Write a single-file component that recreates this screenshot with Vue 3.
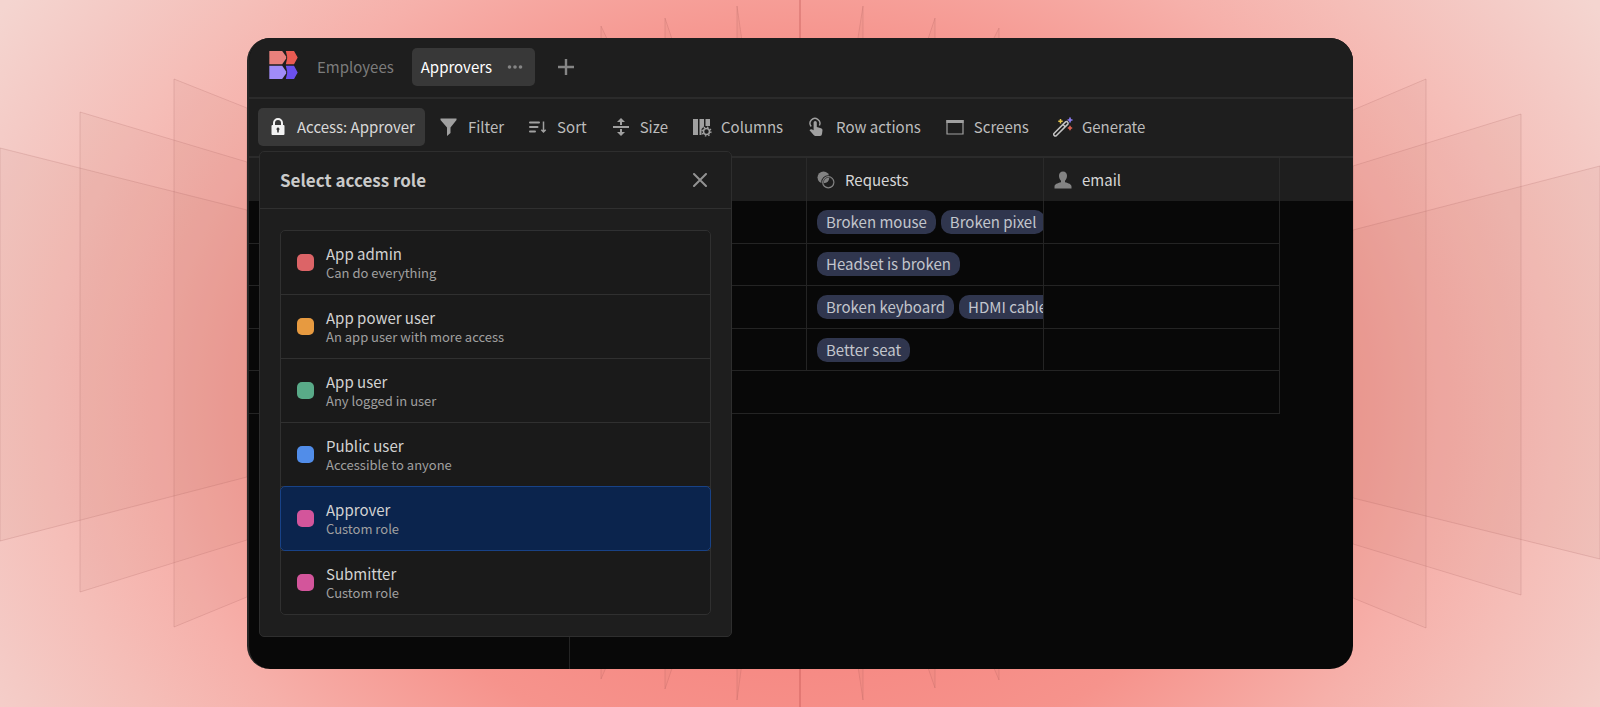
<script setup>
import { ref } from 'vue'

const tools = [
  { icon: 'filter', label: 'Filter' },
  { icon: 'sort', label: 'Sort' },
  { icon: 'size', label: 'Size' },
  { icon: 'columns', label: 'Columns' },
  { icon: 'tap', label: 'Row actions' },
  { icon: 'screen', label: 'Screens' },
  { icon: 'wand', label: 'Generate' },
]

const roles = [
  { name: 'App admin', note: 'Can do everything', tone: 'red' },
  { name: 'App power user', note: 'An app user with more access', tone: 'orange' },
  { name: 'App user', note: 'Any logged in user', tone: 'green' },
  { name: 'Public user', note: 'Accessible to anyone', tone: 'blue' },
  { name: 'Approver', note: 'Custom role', tone: 'pink' },
  { name: 'Submitter', note: 'Custom role', tone: 'pink' },
]
const selected = ref('Approver')

const rows = [
  ['Broken mouse', 'Broken pixel'],
  ['Headset is broken'],
  ['Broken keyboard', 'HDMI cable'],
  ['Better seat'],
]

// Translucent sheets that fan out behind the window
const sheets = [
  '0,148 247,210 247,477 0,541',
  '80,112 247,162 247,540 80,592',
  '174,79 247,108 247,597 174,627',
  '1600,166 1353,230 1353,498 1600,559',
  '1521,114 1353,166 1353,544 1521,595',
  '1426,79 1353,110 1353,598 1426,628',
  '601,26 618,62 618,640 601,679',
  '665,18 685,78 685,630 665,689',
  '737,6 747,76 747,626 737,700',
  '863,6 852,76 852,626 863,700',
  '935,18 915,78 915,630 935,688',
  '999,28 982,62 982,640 999,680',
]
</script>

<template>
  <main class="stage">
    <svg class="backdrop" viewBox="0 0 1600 707" preserveAspectRatio="none" aria-hidden="true">
      <polygon v-for="s in sheets" :key="s" :points="s" />
      <path d="M800 0V707" />
    </svg>

    <section class="window">
      <header class="tabs">
        <svg class="logo" viewBox="0 0 86 85" aria-hidden="true">
          <path fill="#e8807c" d="M0 0H39L51 17V23L39 40H0Z" />
          <path fill="#ea5b52" d="M50 0H75L86 20L75 40H50L54 23V17Z" />
          <path fill="#a08cf8" d="M0 45H39L51 62V68L39 85H0Z" />
          <path fill="#6b50ee" d="M50 45H75L86 65L75 85H50L54 68V62Z" />
        </svg>
        <a class="tab" href="#">Employees</a>
        <div class="tab current">
          <a href="#" aria-current="page">Approvers</a>
          <button class="bare" aria-label="More options">
            <svg width="16" height="16" viewBox="0 0 16 16"><g fill="#858585"><circle cx="2.500" cy="8" r="1.800" /><circle cx="8" cy="8" r="1.800" /><circle cx="13.500" cy="8" r="1.800" /></g></svg>
          </button>
        </div>
        <button class="bare add" aria-label="Add table">
          <svg width="16" height="16" viewBox="0 0 16 16"><path d="M8 0V16M0 8H16" stroke="#858585" stroke-width="2.400" /></svg>
        </button>
      </header>

      <nav class="toolbar">
        <div class="access">
          <button class="tool active">
            <svg viewBox="0 0 20 20">
              <path fill="none" stroke="#f2f2f2" stroke-width="2" d="M6 9V6A4 4 0 0 1 14 6V9" />
              <path fill="#f2f2f2" fill-rule="evenodd" d="M4.500 8H15.500A1 1 0 0 1 16.500 9V17A1 1 0 0 1 15.500 18H4.500A1 1 0 0 1 3.500 17V9A1 1 0 0 1 4.500 8ZM10 10.500A1.600 1.600 0 0 0 9.200 13.400V15.500H10.800V13.400A1.600 1.600 0 0 0 10 10.500Z" />
            </svg>
            Access: Approver
          </button>

          <div class="panel" role="dialog" aria-labelledby="role-title">
            <div class="panel-head">
              <h2 id="role-title">Select access role</h2>
              <button class="bare" aria-label="Close">
                <svg width="14" height="14" viewBox="0 0 14 14"><path d="M1 1L13 13M13 1L1 13" stroke="#929292" stroke-width="2" stroke-linecap="round" /></svg>
              </button>
            </div>
            <ul class="roles">
              <li v-for="r in roles" :key="r.name">
                <button class="role" :class="{ chosen: selected === r.name }" :aria-pressed="selected === r.name" @click="selected = r.name">
                  <span class="swatch" :class="r.tone"></span>
                  <span class="role-text">
                    <span class="role-name">{{ r.name }}</span>
                    <span class="role-note">{{ r.note }}</span>
                  </span>
                </button>
              </li>
            </ul>
          </div>
        </div>

        <button v-for="t in tools" :key="t.label" class="tool">
          <svg v-if="t.icon === 'filter'" viewBox="0 0 20 20"><path fill="#a0a0a0" d="M1.500 1.500H17.500V3L11.500 10.500V16L8 19V10.500L1.500 3Z" /></svg>
          <svg v-else-if="t.icon === 'sort'" viewBox="0 0 20 20"><path fill="none" stroke="#a0a0a0" stroke-width="2" stroke-linecap="round" d="M2 5.500H11M2 10H9.500M2 14.500H7" /><path fill="none" stroke="#a0a0a0" stroke-width="1.500" d="M15.500 4.500V15M13.300 12.700L15.500 15L17.700 12.700" /></svg>
          <svg v-else-if="t.icon === 'size'" viewBox="0 0 20 20"><path fill="#a0a0a0" d="M2 9H18V11H2ZM10 1L14 5H11V8H9V5H6ZM10 19L6 15H9V12H11V15H14Z" /></svg>
          <svg v-else-if="t.icon === 'columns'" viewBox="0 0 20 20">
            <path fill="#a0a0a0" d="M1 2H6V18H1ZM7.500 2H12V9.500L9.500 12V18H7.500ZM13.500 2H18V9H13.500Z" />
            <circle cx="14.500" cy="14.500" r="3" fill="none" stroke="#a0a0a0" stroke-width="1.600" />
            <circle cx="14.500" cy="14.500" r="4.400" fill="none" stroke="#a0a0a0" stroke-width="1.400" stroke-dasharray="1.500 1.956" />
          </svg>
          <svg v-else-if="t.icon === 'tap'" viewBox="0 0 20 20">
            <path fill="none" stroke="#a0a0a0" stroke-width="1.400" d="M4.200 9.500A4.900 4.900 0 1 1 12.400 8.500" />
            <path fill="#a0a0a0" d="M6.600 5.600A1.600 1.600 0 0 1 9.800 5.600V10L14 11.200Q15.600 11.700 15.500 13.300L15 17Q14.800 19 13 19H8.500Q7.500 19 6.700 18L2.500 13.200Q3.500 11.800 5.200 12.500L6.600 13.200Z" />
          </svg>
          <svg v-else-if="t.icon === 'screen'" viewBox="0 0 20 20"><path fill="none" stroke="#a0a0a0" stroke-width="1.200" d="M2 3.500H18V17H2Z" /><path fill="#a0a0a0" d="M1.400 3H18.600V6H1.400Z" /></svg>
          <svg v-else viewBox="0 0 20 20">
            <path fill="none" stroke="#c4c4c4" stroke-width="1.500" d="M1.200 16.200L12.300 5.100A1.500 1.500 0 0 1 14.600 7.400L3.500 18.500A1.500 1.500 0 0 1 1.200 16.200ZM10 7.500L12.200 9.700" />
            <path stroke="#e5c64d" stroke-width="1.500" d="M7.500 2V6.400M5.300 4.200H9.700" />
            <path stroke="#8b7cf0" stroke-width="1.700" d="M17 0.500V5.500M14.500 3H19.500" />
            <path stroke="#e0614f" stroke-width="1.600" d="M17 8.800V13.200M14.800 11H19.200" />
          </svg>
          {{ t.label }}
        </button>
      </nav>

      <div class="grid">
        <table>
          <colgroup><col class="frozen" /><col class="field" /><col class="field" /><col class="last-field" /><col /></colgroup>
          <thead>
            <tr>
              <th class="open"></th>
              <th></th>
              <th>
                <div class="heading">
                  <svg viewBox="0 0 18 18"><circle cx="6.500" cy="6.500" r="6" fill="#838383" /><circle cx="11.300" cy="11.300" r="5.800" fill="#838383" stroke="#1e1e1e" stroke-width="2.400" /><circle cx="11.300" cy="11.300" r="4.800" fill="#1e1e1e" /><path fill="#838383" d="M6.700 12.300A6 6 0 0 0 12.300 6.700A5 5 0 0 0 6.700 12.300Z" /><circle cx="11.300" cy="11.300" r="5.600" fill="none" stroke="#838383" stroke-width="1.200" /></svg>
                  Requests
                </div>
              </th>
              <th>
                <div class="heading">
                  <svg viewBox="0 0 18 18"><path fill="#838383" d="M9 0.500C11.500 0.500 13 2.300 13 4.800C13 7 12.200 8.600 11 9.700V11.200C14.500 12 17.500 13.300 17.500 15.500V17.500H0.500V15.500C0.500 13.300 3.500 12 7 11.200V9.700C5.800 8.600 5 7 5 4.800C5 2.300 6.500 0.500 9 0.500Z" /></svg>
                  email
                </div>
              </th>
              <th class="blank"></th>
            </tr>
          </thead>
          <tbody>
            <tr v-for="row in rows" :key="row[0]">
              <td class="open"></td>
              <td></td>
              <td><div class="pills"><span v-for="p in row" :key="p" class="pill">{{ p }}</span></div></td>
              <td></td>
              <td class="blank"></td>
            </tr>
            <tr>
              <td class="open"></td>
              <td colspan="3"></td>
              <td class="blank"></td>
            </tr>
          </tbody>
        </table>
        <div class="frozen-edge"></div>
      </div>
    </section>
  </main>
</template>

<style>
body {
  background: #f6b0aa;
}
</style>

<style scoped>
.stage {
  position: relative;
  box-sizing: border-box;
  display: flex;
  min-height: 100vh;
  padding: 38px 247px;
  overflow: hidden;
  background: radial-gradient(ellipse 920px 720px at 50% 58%, #f6827c 0%, #f68a84 35%, #f6938c 50%, #f6b0aa 70%, #f5beb8 82%, #f4cac5 93%, #f4d5d0 103%);
  font-family: "Noto Sans CJK SC", "Noto Sans", sans-serif;
  font-size: 15px;
  line-height: 20px;
  color: #d2d2d2;
}
.backdrop {
  position: absolute;
  inset: 0;
  width: 100%;
  height: 100%;
}
.backdrop polygon {
  fill: rgba(190, 110, 100, 0.07);
  stroke: rgba(150, 80, 80, 0.18);
}
.backdrop path {
  stroke: rgba(170, 60, 60, 0.25);
  stroke-width: 2;
}
.window {
  position: relative;
  box-sizing: border-box;
  display: flex;
  flex: 1;
  flex-direction: column;
  min-width: 0;
  overflow: hidden;
  border-left: 2px solid #262626;
  border-radius: 23px;
  background: #080808;
}
button {
  font: inherit;
  color: inherit;
  cursor: pointer;
}
a {
  color: inherit;
  text-decoration: none;
}
.bare {
  display: flex;
  padding: 0;
  border: 0;
  background: none;
}
.tabs {
  box-sizing: border-box;
  display: flex;
  align-items: center;
  height: 61px;
  padding: 0 20px 2px;
  border-bottom: 2px solid #2b2b2b;
  background: #1e1e1e;
}
.logo {
  width: 29px;
  height: 28px;
  margin-right: 19px;
  margin-bottom: 4px;
}
.tab {
  color: #7c7c7c;
}
.current {
  box-sizing: border-box;
  display: flex;
  align-items: center;
  gap: 15px;
  height: 38px;
  margin-left: 18px;
  padding: 0 12px 0 9px;
  border-radius: 5px;
  background: #383838;
  color: #ffffff;
}
.add {
  margin-left: 23px;
}
.toolbar {
  box-sizing: border-box;
  display: flex;
  align-items: center;
  gap: 4px;
  height: 59px;
  padding: 0 9px 1px;
  border-bottom: 2px solid #2b2b2b;
  background: #1e1e1e;
}
.access {
  position: relative;
}
.tool {
  display: flex;
  align-items: center;
  gap: 9px;
  height: 38px;
  padding: 0 10px;
  border: 0;
  border-radius: 5px;
  background: none;
  color: #bcbcbc;
  white-space: nowrap;
}
.tool svg {
  flex: none;
  width: 20px;
  height: 20px;
}
.active {
  background: #383838;
  color: #d8d8d8;
}
.panel {
  position: absolute;
  z-index: 2;
  top: 43px;
  left: 1px;
  box-sizing: border-box;
  width: 473px;
  border: 1px solid #2e2e2e;
  border-radius: 5px;
  background: #1e1e1e;
}
.panel-head {
  display: flex;
  align-items: center;
  justify-content: space-between;
  height: 56px;
  padding: 0 24px 0 20px;
  border-bottom: 1px solid #303030;
}
h2 {
  margin: 0;
  font-size: 17px;
  font-weight: 700;
  line-height: 24px;
  color: #cacaca;
}
.roles {
  margin: 21px 20px;
  padding: 0;
  border: 1px solid #303030;
  border-radius: 5px;
  background: #1a1a1a;
  list-style: none;
}
.roles li + li {
  border-top: 1px solid #303030;
}
.role {
  box-sizing: border-box;
  display: flex;
  align-items: center;
  gap: 12px;
  width: 100%;
  height: 63px;
  padding: 0 16px;
  border: 0;
  background: none;
  text-align: left;
}
.chosen {
  border-radius: 4px;
  outline: 1px solid #184287;
  background: #0b244d;
}
.swatch {
  width: 17px;
  height: 17px;
  border-radius: 5px;
}
.red { background: #dc6467; }
.orange { background: #e79a40; }
.green { background: #59aa88; }
.blue { background: #518de9; }
.pink { background: #d3559b; }
.role-text {
  display: flex;
  flex-direction: column;
}
.role-note {
  font-size: 13px;
  line-height: 18px;
  color: #a0a0a0;
}
.grid {
  display: flex;
  flex: 1;
  flex-direction: column;
}
table {
  width: 100%;
  height: 256px;
  border-collapse: separate;
  border-spacing: 0;
  table-layout: fixed;
}
.frozen {
  width: 321px;
}
.field {
  width: 237px;
}
.last-field {
  width: 236px;
}
th,
td {
  height: 42px;
  box-sizing: border-box;
  padding: 0;
  border-right: 1px solid #242424;
  overflow: hidden;
}
th {
  height: 43px;
  background: #1e1e1e;
  font-weight: 400;
  color: #d6d6d6;
  border-color: #2a2a2a;
}
td {
  border-bottom: 1px solid #242424;
}
.open {
  border-right-color: transparent;
}
.blank {
  border-right: 0;
}
td.blank {
  border-bottom: 0;
}
.heading {
  display: flex;
  align-items: center;
  gap: 10px;
  padding-left: 10px;
}
.heading svg {
  width: 18px;
  height: 18px;
}
.pills {
  display: flex;
  gap: 5px;
  padding-left: 10px;
  overflow: hidden;
}
.pill {
  flex: none;
  padding: 2px 9px;
  border-radius: 10px;
  background: #30364e;
  color: #c2c5cc;
}
.frozen-edge {
  box-sizing: border-box;
  flex: 1;
  width: 321px;
  border-right: 1px solid #242424;
}
</style>
